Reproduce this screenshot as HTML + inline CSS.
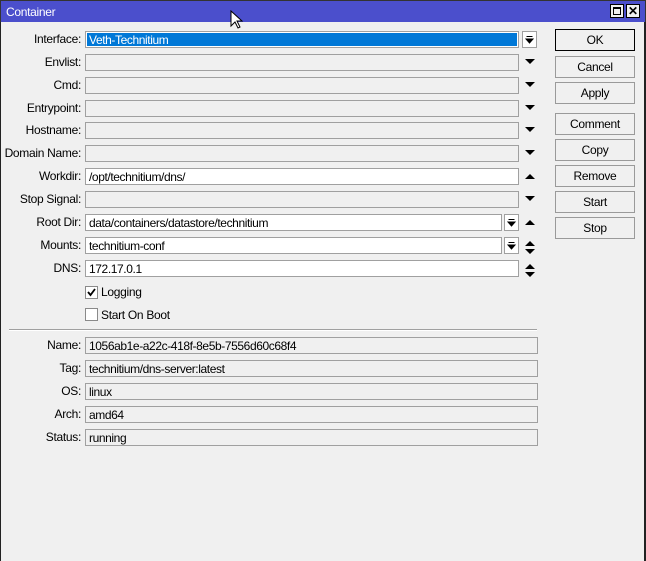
<!DOCTYPE html>
<html><head><meta charset="utf-8"><style>
*{margin:0;padding:0;box-sizing:border-box}
body{width:646px;height:561px;background:#f0f0f0;font-family:"Liberation Sans",Arial,sans-serif;font-size:12px;color:#000;position:relative;overflow:hidden}
.a{position:absolute}
.frame{left:0;top:0;width:646px;height:561px;border-left:1px solid #222;border-right:2px solid #222;border-top:1px solid #333}
.title{left:0;top:0;width:646px;height:22px;background:#4b4fcc;border:1px solid #333;border-bottom:none}
.title span{position:absolute;left:5px;top:4px;color:#fff;font-size:12px;letter-spacing:-0.3px}
.tb{width:14px;height:14px;top:4px;background:#f0f0f0;border:1px solid #000}
.lbl{right:565px;width:100px;text-align:right;letter-spacing:-0.3px;line-height:17px}
.f{left:85px;height:17px;border:1px solid #a0a0a0;background:#f0f0f0;padding-left:3px;line-height:16px;letter-spacing:-0.4px;white-space:nowrap}
.w{background:#fff}
.dd{width:15px;height:17px;border:1px solid #a0a0a0;background:#fff}
.btn{left:555px;width:80px;height:22px;border:1px solid #9a9a9a;background:#f0f0f0;text-align:center;line-height:21px;letter-spacing:-0.3px}
.cb{left:85px;width:13px;height:13px;border:1px solid #8a8a8a;background:#fff}
</style></head><body>
<div class="a frame"></div>
<div class="a title"><span>Container</span></div>
<div class="a tb" style="left:610px"><div style="position:absolute;left:2px;top:2px;width:8px;height:8px;border:1px solid #000;border-top-width:2px"></div></div>
<div class="a tb" style="left:626px;font-weight:bold;font-size:12px;line-height:12px;text-align:center">✕</div>

<div class="a lbl" style="top:31px">Interface:</div>
<div class="a lbl" style="top:54px">Envlist:</div>
<div class="a lbl" style="top:77px">Cmd:</div>
<div class="a lbl" style="top:100px">Entrypoint:</div>
<div class="a lbl" style="top:122px">Hostname:</div>
<div class="a lbl" style="top:145px">Domain Name:</div>
<div class="a lbl" style="top:168px">Workdir:</div>
<div class="a lbl" style="top:191px">Stop Signal:</div>
<div class="a lbl" style="top:214px">Root Dir:</div>
<div class="a lbl" style="top:237px">Mounts:</div>
<div class="a lbl" style="top:260px">DNS:</div>

<div class="a f" style="top:31px;width:434px;background:#fff;padding:1px"><div style="background:#0078d7;color:#fff;height:13px;line-height:14px;padding-left:2px">Veth-Technitium</div></div>
<div class="a dd" style="left:522px;top:31px"><svg width="13" height="15"><path d="M3.5 4.5h6M3 7h7l-3.5 4z" stroke="#000" fill="#000"/></svg></div>
<div class="a f" style="top:54px;width:434px"></div>
<div class="a f" style="top:77px;width:434px"></div>
<div class="a f" style="top:100px;width:434px"></div>
<div class="a f" style="top:122px;width:434px"></div>
<div class="a f" style="top:145px;width:434px"></div>
<div class="a f w" style="top:168px;width:434px">/opt/technitium/dns/</div>
<div class="a f" style="top:191px;width:434px"></div>
<div class="a f w" style="top:214px;width:417px">data/containers/datastore/technitium</div>
<div class="a dd" style="left:504px;top:214px"><svg width="13" height="15"><path d="M3.5 4.5h6M3 7h7l-3.5 4z" stroke="#000" fill="#000"/></svg></div>
<div class="a f w" style="top:237px;width:417px">technitium-conf</div>
<div class="a dd" style="left:504px;top:237px"><svg width="13" height="15"><path d="M3.5 4.5h6M3 7h7l-3.5 4z" stroke="#000" fill="#000"/></svg></div>
<div class="a f w" style="top:260px;width:434px">172.17.0.1</div>

<svg class="a" style="left:523px;top:30px" width="16" height="250">
<g fill="#000">
<path d="M2 29h10l-5 5z"/>
<path d="M2 52h10l-5 5z"/>
<path d="M2 75h10l-5 5z"/>
<path d="M2 97h10l-5 5z"/>
<path d="M2 120h10l-5 5z"/>
<path d="M2 149h10l-5-5z"/>
<path d="M2 166h10l-5 5z"/>
<path d="M2 195h10l-5-5z"/>
<path d="M2 216h10l-5-5zM2 219h10l-5 5z"/>
<path d="M2 239h10l-5-5zM2 242h10l-5 5z"/>
</g></svg>

<div class="a cb" style="top:286px"><svg width="11" height="11"><path d="M2 5l2.5 3L9 2" stroke="#000" stroke-width="1.8" fill="none"/></svg></div>
<div class="a" style="left:101px;top:285px;letter-spacing:-0.3px">Logging</div>
<div class="a cb" style="top:308px"></div>
<div class="a" style="left:101px;top:308px;letter-spacing:-0.3px">Start On Boot</div>

<div class="a" style="left:9px;top:329px;width:528px;height:2px;border-top:1px solid #a0a0a0;border-bottom:1px solid #fff"></div>

<div class="a lbl" style="top:337px">Name:</div>
<div class="a lbl" style="top:360px">Tag:</div>
<div class="a lbl" style="top:383px">OS:</div>
<div class="a lbl" style="top:406px">Arch:</div>
<div class="a lbl" style="top:429px">Status:</div>
<div class="a f" style="top:337px;width:453px">1056ab1e-a22c-418f-8e5b-7556d60c68f4</div>
<div class="a f" style="top:360px;width:453px">technitium/dns-server:latest</div>
<div class="a f" style="top:383px;width:453px">linux</div>
<div class="a f" style="top:406px;width:453px">amd64</div>
<div class="a f" style="top:429px;width:453px">running</div>

<div class="a btn" style="top:29px;border-color:#000">OK</div>
<div class="a btn" style="top:56px">Cancel</div>
<div class="a btn" style="top:82px">Apply</div>
<div class="a btn" style="top:113px">Comment</div>
<div class="a btn" style="top:139px">Copy</div>
<div class="a btn" style="top:165px">Remove</div>
<div class="a btn" style="top:191px">Start</div>
<div class="a btn" style="top:217px">Stop</div>

<svg class="a" style="left:230px;top:10px" width="14" height="20"><path d="M1 1v15l4-4 3 6 2-1-3-6h5z" fill="#fff" stroke="#000"/></svg>
</body></html>
